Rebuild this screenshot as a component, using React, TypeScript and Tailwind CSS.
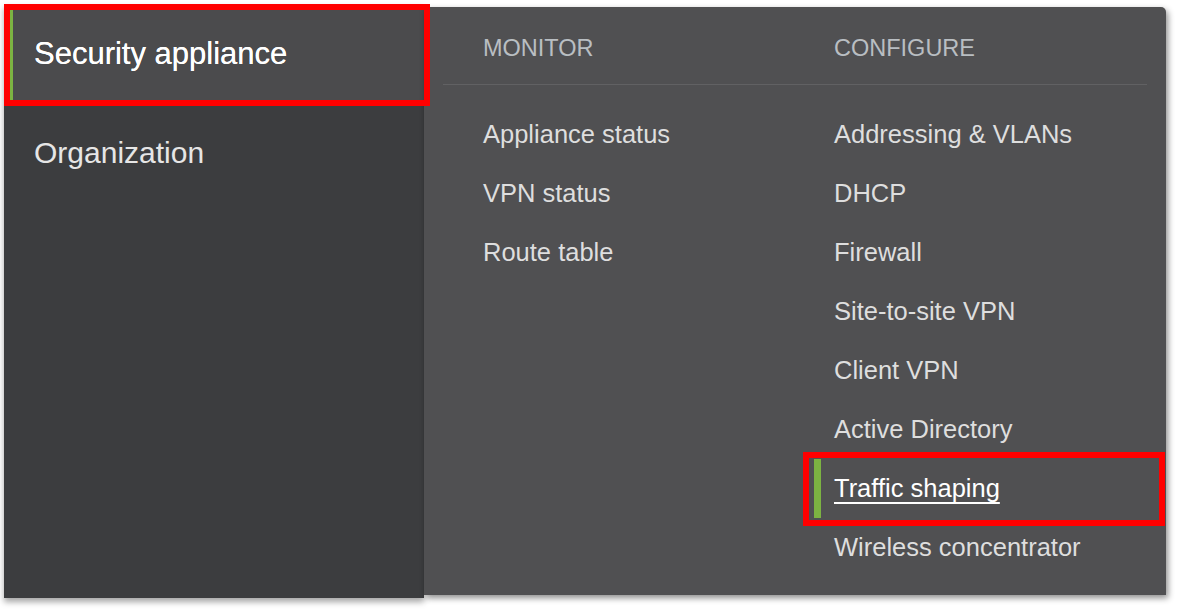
const monitor = ['Appliance status', 'VPN status', 'Route table'];
const configure = [
  'Addressing & VLANs',
  'DHCP',
  'Firewall',
  'Site-to-site VPN',
  'Client VPN',
  'Active Directory',
  'Traffic shaping',
  'Wireless concentrator',
];

export default function App() {
  return (
    <div className="relative h-[612px] w-[1179px] bg-white font-['Liberation_Sans',Arial,sans-serif]">
      <div className="flex pl-[4px]">
        {/* left nav */}
        <aside className="mt-[4px] h-[594px] w-[420px] bg-[#3c3d3f] shadow-[0_4px_6px_rgba(0,0,0,0.35)]">
          <div className="ml-[6px] flex h-[100px] items-center border-l-[3px] border-[#7cb342] bg-[#4b4b4d] pl-[21px]">
            <span className="text-[31px] text-white [text-shadow:0_0_0.6px_#fff]">Security appliance</span>
          </div>
          <div className="flex h-[96px] items-center pl-[30px]">
            <span className="text-[30px] text-[#e6e6e6]">Organization</span>
          </div>
        </aside>

        {/* flyout */}
        <section className="mt-[7px] h-[588px] w-[742px] rounded-tr-[5px] bg-[#505052] shadow-[2px_3px_6px_rgba(0,0,0,0.45)]">
          <div className="mx-[19px] flex h-[78px] items-center border-b border-[#616163] pl-[40px] pt-[6px] text-[23.5px] text-[#b9bec2]">
            <div className="w-[351px]">MONITOR</div>
            <div>CONFIGURE</div>
          </div>
          <div className="flex pl-[59px] pt-[19px] text-[25.5px] text-[#dedede]">
            <ul className="w-[351px]">
              {monitor.map((m) => (
                <li key={m} className="flex h-[59px] items-center pt-[1px]">{m}</li>
              ))}
            </ul>
            <ul>
              {configure.map((c) => (
                <li key={c} className="relative flex h-[59px] items-center pt-[1px]">
                  {c === 'Traffic shaping' ? (
                    <>
                      <span className="absolute left-[-20px] top-[1px] h-[59px] w-[7px] bg-[#7cb342]" />
                      <span className="text-white underline decoration-[2px] underline-offset-[5px]">{c}</span>
                    </>
                  ) : (
                    c
                  )}
                </li>
              ))}
            </ul>
          </div>
        </section>
      </div>

      {/* red annotation boxes */}
      <div className="absolute left-[4px] top-[4px] h-[102px] w-[426px] border-[6px] border-[#ff0000]" />
      <div className="absolute left-[803px] top-[452px] h-[74px] w-[362px] border-[6px] border-[#ff0000]" />
    </div>
  );
}
